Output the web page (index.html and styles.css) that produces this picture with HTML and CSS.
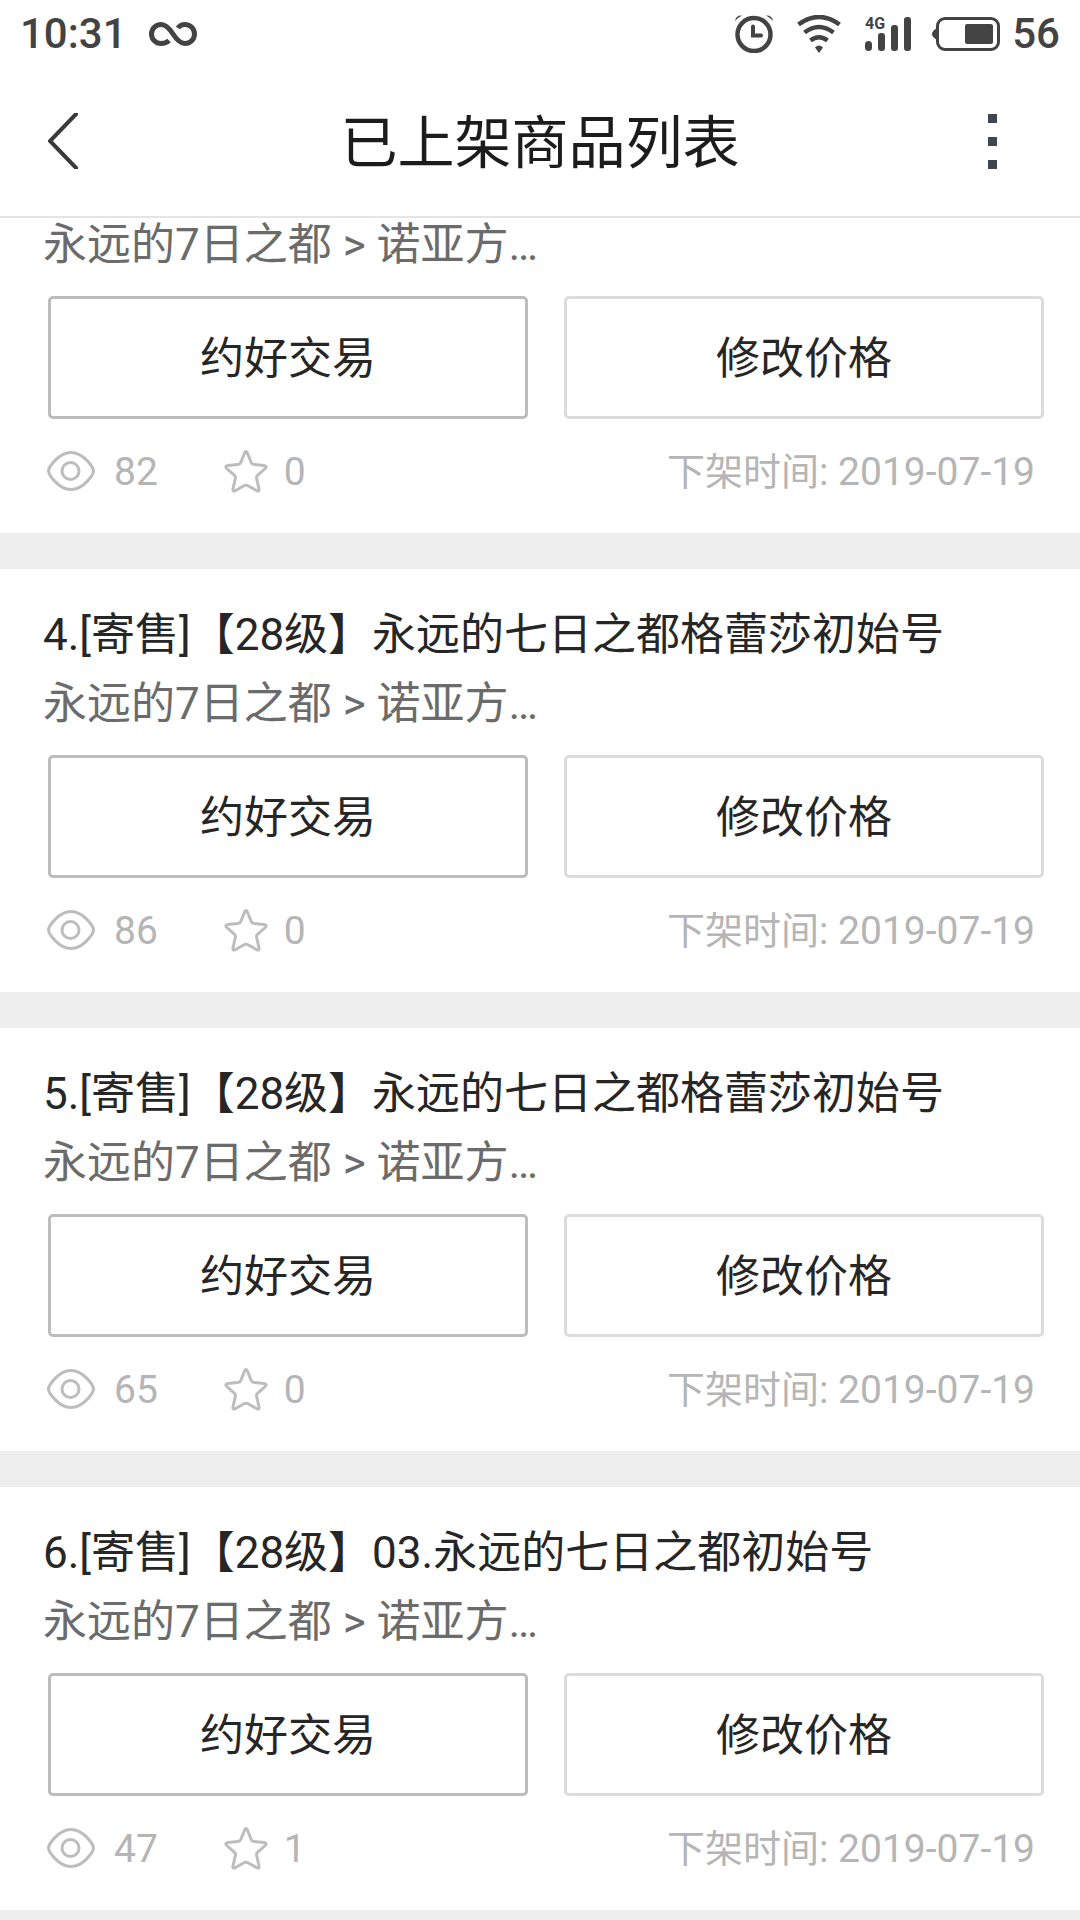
FILE: index.html
```html
<!DOCTYPE html>
<html lang="zh-CN">
<head>
<meta charset="utf-8">
<meta name="viewport" content="width=device-width, initial-scale=1">
<title>已上架商品列表</title>
<link rel="stylesheet" href="styles.css">
</head>
<body>
<svg class="sprite" aria-hidden="true">
  <symbol id="eye" viewBox="0 0 48 40">
    <path d="M1.500 20C1.500 17 11 1.500 24 1.500S46.500 17 46.500 20S37 38.500 24 38.500S1.500 23 1.500 20Z"/>
    <circle cx="23.500" cy="20" r="8.500"/>
  </symbol>
  <symbol id="star" viewBox="0 0 44 44">
    <path d="M22 2.500C23 2.500 23.500 4 24 5.500L27.200 13.500C27.700 14.800 28.500 15.500 30 15.600L40.500 16.600C42.500 17 42.600 18.200 41.200 19.500L33.500 26.300C32.600 27.100 32.300 28 32.600 29.200L35 40C35.300 42 34.300 42.500 32.800 41.700L24 36.800C22.700 36.100 21.300 36.100 20 36.800L11.200 41.700C9.700 42.500 8.700 42 9 40L11.400 29.200C11.700 28 11.400 27.100 10.500 26.300L2.800 19.500C1.400 18.200 1.500 17 3.500 16.600L14 15.600C15.500 15.500 16.300 14.800 16.800 13.500L20 5.500C20.500 4 21 2.500 22 2.500Z"/>
  </symbol>
</svg>

<header class="top">
  <div class="status">
    <span class="clock">10:31</span>
    <svg class="infinity" viewBox="0 0 48 24" aria-hidden="true">
      <path d="M20 18.500C17.800 20.700 15 21.500 12 21.500A9.500 9.500 0 0 1 12 2.500C16.500 2.500 19.500 5 24 12S31.500 21.500 36 21.500A9.500 9.500 0 0 0 36 2.500C33 2.500 30.500 3.500 29 6"/>
    </svg>
    <div class="indicators">
      <svg class="alarm" viewBox="0 0 38 38" aria-hidden="true">
        <circle cx="19" cy="19.500" r="16.500" fill="none" stroke="currentColor" stroke-width="4.500"/>
        <path d="M18 11.500V20.500H26" fill="none" stroke="currentColor" stroke-width="4" stroke-linecap="round"/>
        <path d="M0 6Q1 0 7 .5Q3 2.500 0 6ZM38 6Q37 0 31 .5Q35 2.500 38 6Z" fill="currentColor"/>
      </svg>
      <svg class="wifi" viewBox="0 0 44 38" aria-hidden="true">
        <path d="M1.500 9.500Q22-5.500 42.500 9.500M7.500 17.500Q22 6.500 36.500 17.500M13.500 25.500Q22 19 30.500 25.500" fill="none" stroke="currentColor" stroke-width="4.500"/>
        <path d="M22 38L18 32.500Q22 28.500 26 32.500Z" fill="currentColor"/>
      </svg>
      <svg class="signal" viewBox="0 0 46 34" fill="currentColor" aria-hidden="true">
        <text class="network" x="0" y="12">4G</text>
        <rect x="0" y="24" width="7" height="10" rx="3.500"/>
        <rect x="13" y="16" width="7" height="18" rx="3"/>
        <rect x="26" y="8" width="7" height="26" rx="3"/>
        <rect x="39" y="0" width="7" height="34" rx="3"/>
      </svg>
      <svg class="battery" viewBox="0 0 68 34" aria-hidden="true">
        <rect x="5.500" y="1.500" width="61" height="31" rx="7.500" fill="none" stroke="currentColor" stroke-width="3"/>
        <rect x="33" y="7" width="28" height="20" rx="2" fill="currentColor"/>
        <path d="M5 11Q0 14 0 17T5 23Z" fill="currentColor"/>
      </svg>
      <span class="level">56</span>
    </div>
  </div>
  <nav class="nav">
    <button class="nav-button" type="button" aria-label="返回">
      <svg class="back" viewBox="0 0 30 56" aria-hidden="true"><path d="M30 -1L2 28L30 57"/></svg>
    </button>
    <h1 class="nav-title">已上架商品列表</h1>
    <button class="nav-button nav-more" type="button" aria-label="更多">
      <span class="dot"></span><span class="dot"></span><span class="dot"></span>
    </button>
  </nav>
</header>

<main class="list">
  <article class="card card-scrolled">
    <p class="path">永远的7日之都 &gt; 诺亚方…</p>
    <div class="actions">
      <button class="action action-primary" type="button">约好交易</button>
      <button class="action" type="button">修改价格</button>
    </div>
    <div class="meta">
      <svg class="eye" aria-hidden="true"><use href="#eye"/></svg><span class="views">82</span>
      <svg class="star" aria-hidden="true"><use href="#star"/></svg><span class="likes">0</span>
      <span class="date"><span class="date-label">下架时间</span>: 2019-07-19</span>
    </div>
  </article>

  <article class="card">
    <h2 class="title">4.[寄售]【28级】永远的七日之都格蕾莎初始号</h2>
    <p class="path">永远的7日之都 &gt; 诺亚方…</p>
    <div class="actions">
      <button class="action action-primary" type="button">约好交易</button>
      <button class="action" type="button">修改价格</button>
    </div>
    <div class="meta">
      <svg class="eye" aria-hidden="true"><use href="#eye"/></svg><span class="views">86</span>
      <svg class="star" aria-hidden="true"><use href="#star"/></svg><span class="likes">0</span>
      <span class="date"><span class="date-label">下架时间</span>: 2019-07-19</span>
    </div>
  </article>

  <article class="card">
    <h2 class="title">5.[寄售]【28级】永远的七日之都格蕾莎初始号</h2>
    <p class="path">永远的7日之都 &gt; 诺亚方…</p>
    <div class="actions">
      <button class="action action-primary" type="button">约好交易</button>
      <button class="action" type="button">修改价格</button>
    </div>
    <div class="meta">
      <svg class="eye" aria-hidden="true"><use href="#eye"/></svg><span class="views">65</span>
      <svg class="star" aria-hidden="true"><use href="#star"/></svg><span class="likes">0</span>
      <span class="date"><span class="date-label">下架时间</span>: 2019-07-19</span>
    </div>
  </article>

  <article class="card">
    <h2 class="title">6.[寄售]【28级】03.永远的七日之都初始号</h2>
    <p class="path">永远的7日之都 &gt; 诺亚方…</p>
    <div class="actions">
      <button class="action action-primary" type="button">约好交易</button>
      <button class="action" type="button">修改价格</button>
    </div>
    <div class="meta">
      <svg class="eye" aria-hidden="true"><use href="#eye"/></svg><span class="views">47</span>
      <svg class="star" aria-hidden="true"><use href="#star"/></svg><span class="likes">1</span>
      <span class="date"><span class="date-label">下架时间</span>: 2019-07-19</span>
    </div>
  </article>
</main>
</body>
</html>
```
FILE: styles.css
```css
* {
  box-sizing: border-box;
}

body {
  margin: 0;
  background: #eee;
  color: #262626;
  font-family: Roboto, "Noto Sans CJK SC", sans-serif;
  font-size: 44px;
}

h1,
h2,
p {
  margin: 0;
  font-size: inherit;
  font-weight: 400;
}

button {
  padding: 0;
  border: 0;
  background: none;
  color: inherit;
  font: inherit;
}

svg {
  display: block;
  flex: none;
}

.sprite {
  position: absolute;
  width: 0;
  height: 0;
}

/* Header */

.top {
  background: #fff;
}

.status {
  display: flex;
  align-items: center;
  height: 68px;
  padding: 0 20px;
  color: #434343;
  font-size: 42px;
  font-weight: 500;
  line-height: 68px;
}

.infinity {
  width: 48px;
  height: 24px;
  margin-left: 22px;
  fill: none;
  stroke: currentColor;
  stroke-width: 5;
}

.indicators {
  display: flex;
  align-items: center;
  height: 66px;
  margin-left: auto;
}

.alarm {
  width: 38px;
  height: 38px;
}

.wifi {
  width: 44px;
  height: 38px;
  margin-left: 24px;
}

.signal {
  width: 46px;
  height: 34px;
  margin-left: 24px;
  overflow: visible;
}

.network {
  font-size: 16px;
  font-weight: 700;
}

.battery {
  width: 68px;
  height: 34px;
  margin-left: 21px;
}

.level {
  margin-left: 12px;
}

.nav {
  display: flex;
  align-items: center;
  justify-content: space-between;
  height: 150px;
  padding: 0 48px;
  border-bottom: 2px solid #e5e5e5;
}

.nav-button {
  width: 80px;
  height: 80px;
  margin-bottom: 2px;
}

.nav-title {
  padding-top: 4px;
  color: #1c1c1c;
  font-size: 57px;
  line-height: 80px;
}

.back {
  width: 30px;
  height: 56px;
  fill: none;
  stroke: #3a3a3a;
  stroke-width: 4;
}

.nav-more {
  display: flex;
  flex-direction: column;
  align-items: center;
  justify-content: center;
  gap: 14px;
}

.dot {
  width: 9px;
  height: 9px;
  background: #3f4651;
}

/* Listing cards */

.list {
  display: flex;
  flex-direction: column;
  gap: 36px;
}

.card {
  padding: 31px 0 29px;
  background: #fff;
}

.title,
.path {
  padding: 0 43px;
}

.title {
  line-height: 70px;
}

.path {
  color: #6b6b6b;
  line-height: 68px;
}

.actions {
  display: grid;
  grid-template-columns: 1fr 1fr;
  gap: 36px;
  margin-top: 17px;
  padding: 0 36px 0 48px;
}

/* The first card is scrolled up so that its title is behind the header. */

.card-scrolled {
  padding-top: 0;
}

.card-scrolled .path {
  line-height: 54px;
}

.card-scrolled .actions {
  margin-top: 24px;
}

.action {
  height: 123px;
  padding-bottom: 6px;
  border: 3px solid #dcdcdc;
  border-radius: 5px;
}

.action-primary {
  border-color: #bcbcbc;
}

.meta {
  display: flex;
  align-items: center;
  margin-top: 21px;
  padding: 0 45px 0 47px;
  color: #b5b5b5;
  font-size: 39px;
  line-height: 64px;
}

.eye,
.star {
  margin-bottom: 2px;
  fill: none;
  stroke: #bfbcbd;
  stroke-width: 3;
}

.eye {
  width: 48px;
  height: 40px;
}

.star {
  width: 44px;
  height: 44px;
  margin-left: 66px;
}

.views {
  margin-left: 19px;
}

.likes {
  margin-left: 16px;
}

.date {
  margin-left: auto;
}

.date-label {
  font-size: 38px;
}
```
